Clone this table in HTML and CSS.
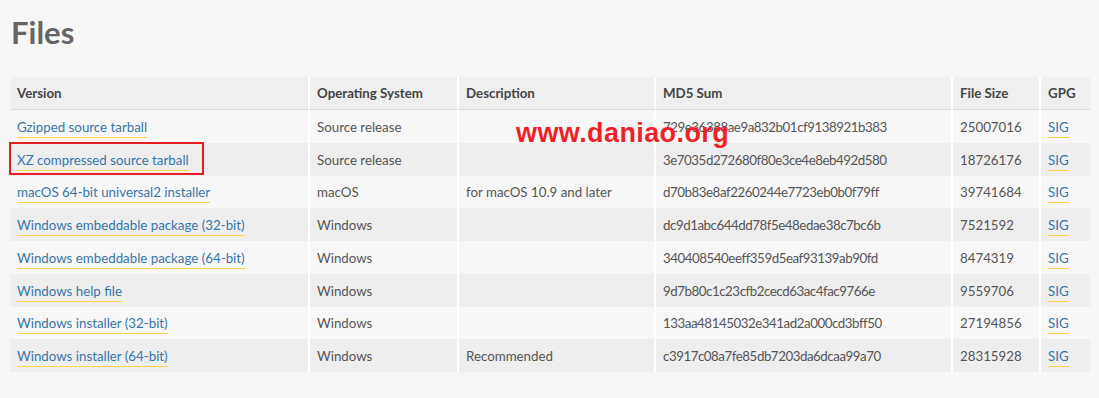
FILE: index.html
```html
<!DOCTYPE html>
<html lang="en">
<head>
<meta charset="utf-8">
<title>Files</title>
<link rel="stylesheet" href="styles.css">
</head>
<body>
<div class="page">
  <h1 class="title">Files</h1>
  <table class="files">
    <colgroup>
      <col class="c-version">
      <col class="c-os">
      <col class="c-desc">
      <col class="c-md5">
      <col class="c-size">
      <col class="c-gpg">
    </colgroup>
    <thead>
      <tr>
        <th>Version</th>
        <th>Operating System</th>
        <th>Description</th>
        <th>MD5 Sum</th>
        <th>File Size</th>
        <th>GPG</th>
      </tr>
    </thead>
    <tbody>
      <tr>
        <td><a href="#">Gzipped source tarball</a></td>
        <td>Source release</td>
        <td></td>
        <td class="md5">729e36388ae9a832b01cf9138921b383</td>
        <td>25007016</td>
        <td><a href="#">SIG</a></td>
      </tr>
      <tr>
        <td class="marked"><a href="#">XZ compressed source tarball</a><span class="mark-box"></span></td>
        <td>Source release</td>
        <td></td>
        <td class="md5">3e7035d272680f80e3ce4e8eb492d580</td>
        <td>18726176</td>
        <td><a href="#">SIG</a></td>
      </tr>
      <tr>
        <td><a href="#">macOS 64-bit universal2 installer</a></td>
        <td>macOS</td>
        <td>for macOS 10.9 and later</td>
        <td class="md5">d70b83e8af2260244e7723eb0b0f79ff</td>
        <td>39741684</td>
        <td><a href="#">SIG</a></td>
      </tr>
      <tr>
        <td><a href="#">Windows embeddable package (32-bit)</a></td>
        <td>Windows</td>
        <td></td>
        <td class="md5">dc9d1abc644dd78f5e48edae38c7bc6b</td>
        <td>7521592</td>
        <td><a href="#">SIG</a></td>
      </tr>
      <tr>
        <td><a href="#">Windows embeddable package (64-bit)</a></td>
        <td>Windows</td>
        <td></td>
        <td class="md5">340408540eeff359d5eaf93139ab90fd</td>
        <td>8474319</td>
        <td><a href="#">SIG</a></td>
      </tr>
      <tr>
        <td><a href="#">Windows help file</a></td>
        <td>Windows</td>
        <td></td>
        <td class="md5">9d7b80c1c23cfb2cecd63ac4fac9766e</td>
        <td>9559706</td>
        <td><a href="#">SIG</a></td>
      </tr>
      <tr>
        <td><a href="#">Windows installer (32-bit)</a></td>
        <td>Windows</td>
        <td></td>
        <td class="md5">133aa48145032e341ad2a000cd3bff50</td>
        <td>27194856</td>
        <td><a href="#">SIG</a></td>
      </tr>
      <tr>
        <td><a href="#">Windows installer (64-bit)</a></td>
        <td>Windows</td>
        <td>Recommended</td>
        <td class="md5">c3917c08a7fe85db7203da6dcaa99a70</td>
        <td>28315928</td>
        <td><a href="#">SIG</a></td>
      </tr>
    </tbody>
  </table>
  <div class="watermark">www.daniao.org</div>
</div>
</body>
</html>
```

FILE: styles.css
```css
html, body {
  margin: 0;
  padding: 0;
}

body {
  background: #f6f6f6;
  font-family: Lato, "Open Sans", sans-serif;
  color: #555;
}

.page {
  position: relative;
  padding: 10px 9px 0 10px;
}

.title {
  margin: 4px 0 27px 1px;
  font-size: 31px;
  line-height: 36px;
  font-weight: 700;
  color: #666;
}

.files {
  width: 1080px;
  table-layout: fixed;
  border-collapse: separate;
  border-spacing: 0;
  font-size: 13.3px;
}

.c-version { width: 298px; }
.c-os { width: 149px; }
.c-desc { width: 197px; }
.c-md5 { width: 297px; }
.c-size { width: 88px; }
.c-gpg { width: 51px; }

.files th,
.files td {
  padding: 0 7px;
  text-align: left;
  vertical-align: middle;
  white-space: nowrap;
}

.files th + th,
.files td + td {
  border-left: 2px solid #fff;
}

.files th {
  height: 32px;
  background: #efefef;
  border-bottom: 1px solid #dcdcdc;
  font-weight: 700;
  color: #444;
}

.files td {
  box-sizing: border-box;
  height: 32.75px;
  padding-top: 1px;
  color: #555;
}

.files td.md5 {
  letter-spacing: -0.45px;
}

.files tbody tr:nth-child(odd) td {
  background: #f7f7f7;
}

.files tbody tr:nth-child(even) td {
  background: #eeeeee;
}

.files a {
  color: #3775a9;
  text-decoration: none;
  border-bottom: 1px solid #ffd343;
  padding-bottom: 2px;
}

.marked {
  position: relative;
}

.mark-box {
  position: absolute;
  left: -1px;
  top: -1px;
  width: 191px;
  height: 29px;
  border: 2px solid #e51c23;
}

.watermark {
  position: absolute;
  left: 516px;
  top: 117px;
  font-family: "Liberation Sans", Arial, sans-serif;
  font-weight: 700;
  font-size: 27px;
  letter-spacing: 0.4px;
  line-height: 32px;
  color: #ef1f2a;
}
```
